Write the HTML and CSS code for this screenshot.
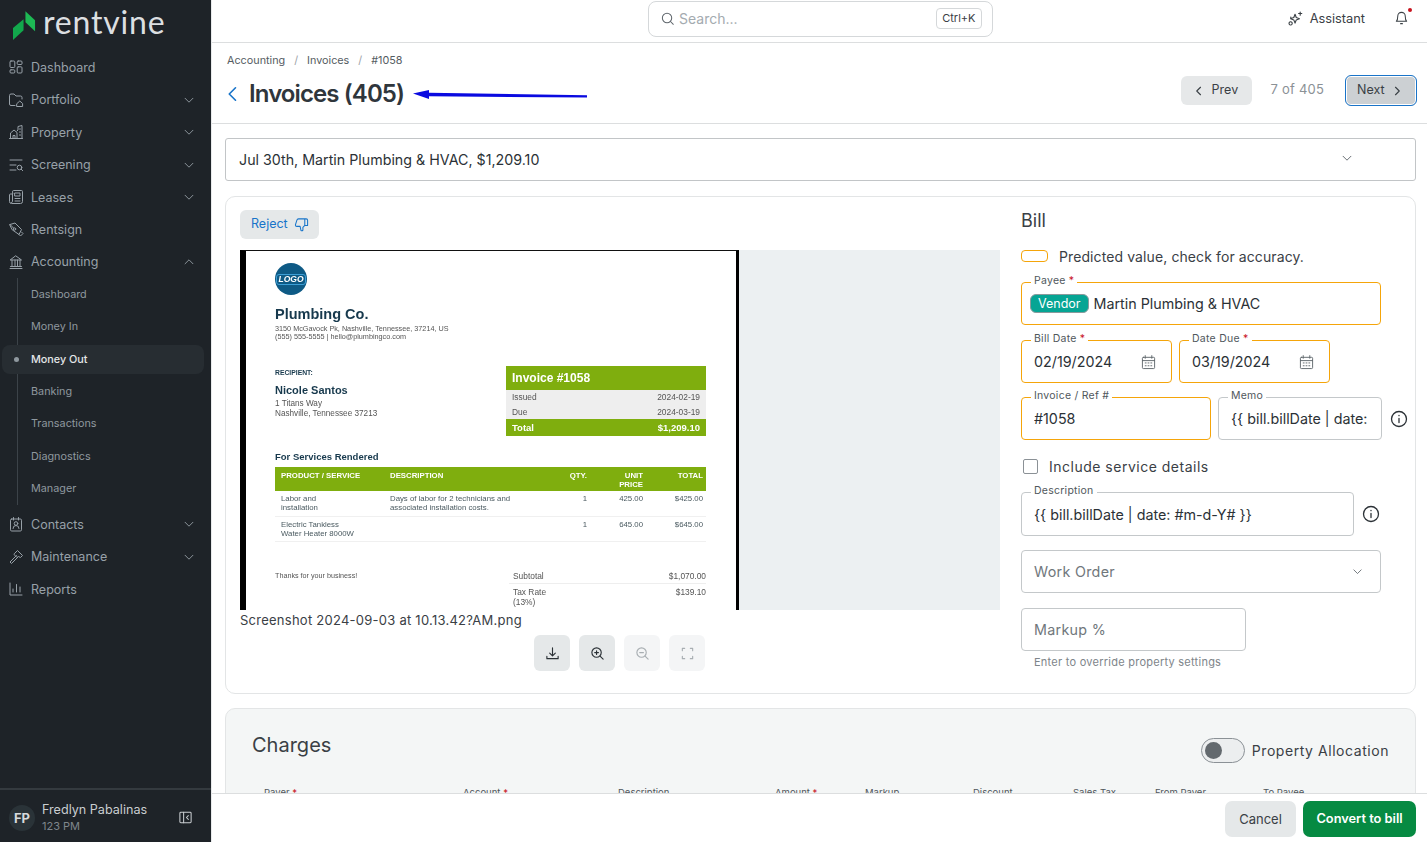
FILE: index.html
```html
<!DOCTYPE html>
<html lang="en">
<head>
    <meta charset="UTF-8">
    <meta name="viewport" content="width=device-width, initial-scale=1.0">
    <title>Invoices (405)</title>
    <link rel="stylesheet" href="styles.css">
</head>
<body>
    <svg class="icon-defs" aria-hidden="true">
        <symbol id="i-dash" viewBox="0 0 16 16"><rect x="2" y="2" width="4.8" height="6.5" rx="1"/><rect x="9.2" y="2" width="4.8" height="3.5" rx="1"/><rect x="2" y="10.8" width="4.8" height="3.2" rx="1"/><rect x="9.2" y="7.8" width="4.8" height="6.2" rx="1"/></symbol>
        <symbol id="i-folder" viewBox="0 0 16 16"><path d="M7 13.5H3a1.5 1.5 0 0 1-1.5-1.5V3.5A1.5 1.5 0 0 1 3 2h3l2 2h4.500a1.500 1.500 0 0 1 1.500 1.500V7"/><path d="M9 11.500l2.800-2.500 2.800 2.500v3H9z"/></symbol>
        <symbol id="i-building" viewBox="0 0 16 16"><path d="M1.500 14.500h13M2.500 14.500V9l3.500-3 3 2.500v6M9 7l1-1V2.500l4-1v13"/><path d="M5 14.500v-3h2v3M11.500 5h1M11.500 8h1M11.500 11h1"/></symbol>
        <symbol id="i-screen" viewBox="0 0 16 16"><path d="M2 3h12M2 8h6M2 13h6"/><circle cx="11.500" cy="10.500" r="2.300"/><path d="M13.200 12.200l1.500 1.500"/></symbol>
        <symbol id="i-news" viewBox="0 0 16 16"><path d="M4.500 2.500a1 1 0 0 1 1-1h8a1 1 0 0 1 1 1v10a2 2 0 0 1-2 2h-9a2 2 0 0 1-2-2V6a1 1 0 0 1 1-1h2zM4.500 5v7.500a1 1 0 0 1-1 1"/><rect x="7" y="4" width="5" height="3"/><path d="M7 9.500h5M7 12h5"/></symbol>
        <symbol id="i-pen" viewBox="0 0 16 16"><path d="M2 3.500L7 2l6.500 6.500-2.500 5L4.500 9zM2 3.500l3.500 3.500M11 13.500l1.500 1.500 2.500-2.500-1.500-1.500"/><circle cx="6.500" cy="8" r="1.200"/></symbol>
        <symbol id="i-bank" viewBox="0 0 16 16"><path d="M2 14.500h12M2.500 12.500h11M2.500 6h11L8 2zM4 6v6.500M7 6v6.500M9.500 6v6.500M12 6v6.500"/></symbol>
        <symbol id="i-badge" viewBox="0 0 16 16"><rect x="2.500" y="3" width="11" height="12" rx="1.200"/><path d="M5.500 1.500V4M10.500 1.500V4M5 12.500a3 3 0 0 1 6 0"/><circle cx="8" cy="7.500" r="1.800"/></symbol>
        <symbol id="i-hammer" viewBox="0 0 16 16"><path d="M8.500 6.500l-6.500 6.500 1.500 1.500 6.500-6.500M6.500 4.500L9.500 1.500l5 5-2 2-2-1-1.500 1-2.500-2.500z"/></symbol>
        <symbol id="i-chart" viewBox="0 0 16 16"><path d="M2 2v12h12M5 11V8M8.500 11V3.500M12 11V6"/></symbol>
        <symbol id="i-down" viewBox="0 0 16 16"><path d="M3.500 6l4.500 4.500L12.500 6"/></symbol>
        <symbol id="i-up" viewBox="0 0 16 16"><path d="M3.500 10l4.500-4.500 4.500 4.500"/></symbol>
        <symbol id="i-left" viewBox="0 0 16 16"><path d="M10 3L5 8l5 5"/></symbol>
        <symbol id="i-right" viewBox="0 0 16 16"><path d="M6 3l5 5-5 5"/></symbol>
        <symbol id="i-cal" viewBox="0 0 16 16"><rect x="1.500" y="3" width="13" height="12" rx="1"/><path d="M1.500 6.500h13M4.500 1.200V4M11.500 1.200V4M4.500 9h1M7.500 9h1M10.500 9h1M4.500 12h1M7.500 12h1M10.500 12h1"/></symbol>
        <symbol id="i-info" viewBox="0 0 18 18"><circle cx="9" cy="9" r="7.500"/><path d="M9 8.500v4M9 5.300v.4"/></symbol>
    </svg>

    <aside class="sidebar">
        <div class="logo">
            <svg class="logo-mark" viewBox="0 0 24 32"><path d="M13 0l10 9.500V21L13 11.500z" fill="#1db954"/><path d="M0 17.500L11 8.500V20L0 30z" fill="#12a84c"/></svg>
            <span class="logo-text">rentvine</span>
        </div>
        <nav class="nav">
            <a class="nav-item"><svg class="nav-icon"><use href="#i-dash"/></svg>Dashboard</a>
            <a class="nav-item"><svg class="nav-icon"><use href="#i-folder"/></svg>Portfolio<svg class="nav-chev"><use href="#i-down"/></svg></a>
            <a class="nav-item"><svg class="nav-icon"><use href="#i-building"/></svg>Property<svg class="nav-chev"><use href="#i-down"/></svg></a>
            <a class="nav-item"><svg class="nav-icon"><use href="#i-screen"/></svg>Screening<svg class="nav-chev"><use href="#i-down"/></svg></a>
            <a class="nav-item"><svg class="nav-icon"><use href="#i-news"/></svg>Leases<svg class="nav-chev"><use href="#i-down"/></svg></a>
            <a class="nav-item"><svg class="nav-icon"><use href="#i-pen"/></svg>Rentsign</a>
            <a class="nav-item"><svg class="nav-icon"><use href="#i-bank"/></svg>Accounting<svg class="nav-chev"><use href="#i-up"/></svg></a>
            <div class="subnav">
                <a class="sub-item">Dashboard</a>
                <a class="sub-item">Money In</a>
                <a class="sub-item active">Money Out</a>
                <a class="sub-item">Banking</a>
                <a class="sub-item">Transactions</a>
                <a class="sub-item">Diagnostics</a>
                <a class="sub-item">Manager</a>
            </div>
            <a class="nav-item"><svg class="nav-icon"><use href="#i-badge"/></svg>Contacts<svg class="nav-chev"><use href="#i-down"/></svg></a>
            <a class="nav-item"><svg class="nav-icon"><use href="#i-hammer"/></svg>Maintenance<svg class="nav-chev"><use href="#i-down"/></svg></a>
            <a class="nav-item"><svg class="nav-icon"><use href="#i-chart"/></svg>Reports</a>
        </nav>
        <div class="user">
            <div class="avatar">FP</div>
            <div class="user-info">
                <div class="user-name">Fredlyn Pabalinas</div>
                <div class="user-org">123 PM</div>
            </div>
            <svg class="collapse-icon" viewBox="0 0 16 16"><rect x="2" y="2.500" width="12" height="11" rx="1"/><path d="M6 2.500v11M11 6L9 8l2 2"/></svg>
        </div>
    </aside>

    <div class="main">
        <header class="topbar">
            <div class="search">
                <svg class="search-icon" viewBox="0 0 16 16"><circle cx="7.500" cy="7.500" r="5"/><path d="M11.200 11.200l3 3"/></svg>
                <span class="search-text">Search...</span>
                <span class="kbd">Ctrl+K</span>
            </div>
            <div class="topbar-right">
                <a class="assistant">
                    <svg class="assistant-icon" viewBox="0 0 16 16"><path d="M7.500 3.500l1.300 3.400 3.400 1.300-3.400 1.300-1.300 3.400-1.300-3.400-3.400-1.300 3.400-1.300zM13 1v3.500M11.300 2.700h3.400M2.800 11.500a1.700 1.700 0 1 0 .01 0zM3 6.500v1.500"/></svg>
                    Assistant
                </a>
                <div class="bell">
                    <svg class="bell-icon" viewBox="0 0 16 16"><path d="M8 2a4 4 0 0 0-4 4c0 4-1.500 5.500-1.500 5.500h11S12 10 12 6a4 4 0 0 0-4-4zM7 14h2"/></svg>
                    <span class="bell-dot"></span>
                </div>
            </div>
        </header>

        <div class="page-head">
            <div>
                <div class="crumbs">
                    <span>Accounting</span><span class="crumb-sep">/</span><span>Invoices</span><span class="crumb-sep">/</span><span>#1058</span>
                </div>
                <div class="title-row">
                    <svg class="back-icon"><use href="#i-left"/></svg>
                    <h1>Invoices (405)</h1>
                </div>
            </div>
            <div class="pager">
                <button class="btn btn-grey"><svg class="btn-chev"><use href="#i-left"/></svg>Prev</button>
                <span class="pager-count">7 of 405</span>
                <button class="btn btn-next">Next<svg class="btn-chev"><use href="#i-right"/></svg></button>
            </div>
            <svg class="annot-arrow" viewBox="0 0 174 12"><path d="M0 3.500L16 0v2.800L174 5.200v2.300L16 6.300V9z" fill="#0a0ae0"/></svg>
        </div>

        <div class="content">
            <div class="invoice-select">
                <span>Jul 30th, Martin Plumbing &amp; HVAC, $1,209.10</span>
                <svg class="select-chev"><use href="#i-down"/></svg>
            </div>

            <section class="card">
                <div class="doc-col">
                    <button class="btn-reject">Reject
                        <svg class="thumb-icon" viewBox="0 0 16 16"><path d="M5 2h8a1.500 1.500 0 0 1 1.500 1.500V9h-3L9.500 11v3a1.500 1.500 0 0 1-2 .5L6.500 10H3A1.500 1.500 0 0 1 1.500 8.500L3 3.500A2 2 0 0 1 5 2zM11.500 2v7"/></svg>
                    </button>
                    <div class="viewer">
                        <div class="sheet">
                            <div class="inv-logo"><span>LOGO</span></div>
                            <div class="inv-company">Plumbing Co.</div>
                            <div class="inv-address">3150 McGavock Pk, Nashville, Tennessee, 37214, US<br>(555) 555-5555 | hello@plumbingco.com</div>
                            <div class="inv-top">
                                <div class="inv-recipient">
                                    <div class="inv-rec-label">RECIPIENT:</div>
                                    <div class="inv-rec-name">Nicole Santos</div>
                                    <div class="inv-rec-addr">1 Titans Way<br>Nashville, Tennessee 37213</div>
                                </div>
                                <div class="inv-box">
                                    <div class="inv-box-head">Invoice #1058</div>
                                    <div class="inv-box-row"><span>Issued</span><span>2024-02-19</span></div>
                                    <div class="inv-box-row"><span>Due</span><span>2024-03-19</span></div>
                                    <div class="inv-box-total"><span>Total</span><span>$1,209.10</span></div>
                                </div>
                            </div>
                            <div class="inv-section">For Services Rendered</div>
                            <table class="inv-table">
                                <colgroup><col class="c-prod"><col class="c-desc"><col class="c-qty"><col class="c-unit"><col class="c-total"></colgroup>
                                <thead>
                                    <tr><th>PRODUCT / SERVICE</th><th>DESCRIPTION</th><th class="num">QTY.</th><th class="num">UNIT<br>PRICE</th><th class="num">TOTAL</th></tr>
                                </thead>
                                <tbody>
                                    <tr><td>Labor and<br>installation</td><td>Days of labor for 2 technicians and<br>associated installation costs.</td><td class="num">1</td><td class="num">425.00</td><td class="num">$425.00</td></tr>
                                    <tr><td>Electric Tankless<br>Water Heater 8000W</td><td></td><td class="num">1</td><td class="num">645.00</td><td class="num">$645.00</td></tr>
                                </tbody>
                            </table>
                            <div class="inv-foot">
                                <div class="inv-thanks">Thanks for your business!</div>
                                <div class="inv-sums">
                                    <div class="inv-sum-row line"><span>Subtotal</span><span>$1,070.00</span></div>
                                    <div class="inv-sum-row"><span>Tax Rate<br>(13%)</span><span>$139.10</span></div>
                                </div>
                            </div>
                        </div>
                    </div>
                    <div class="file-name">Screenshot 2024-09-03 at 10.13.42?AM.png</div>
                    <div class="viewer-tools">
                        <button class="tool"><svg viewBox="0 0 16 16"><path d="M8 2v8M5 7.500L8 10.500l3-3M2 11v2.500h12V11"/></svg></button>
                        <button class="tool"><svg viewBox="0 0 16 16"><circle cx="7" cy="7" r="5"/><path d="M10.700 10.700l3.300 3.300M5 7h4M7 5v4"/></svg></button>
                        <button class="tool off"><svg viewBox="0 0 16 16"><circle cx="7" cy="7" r="5"/><path d="M10.700 10.700l3.300 3.300M5 7h4"/></svg></button>
                        <button class="tool off"><svg viewBox="0 0 16 16"><path d="M2.500 5V2.500H5M11 2.500h2.500V5M13.500 11v2.500H11M5 13.500H2.500V11"/></svg></button>
                    </div>
                </div>

                <div class="bill-col">
                    <h2>Bill</h2>
                    <div class="legend"><span class="legend-pill"></span>Predicted value, check for accuracy.</div>

                    <div class="field predicted w-payee">
                        <label>Payee <b>*</b></label>
                        <span class="vendor-tag">Vendor</span>
                        <span class="payee-name">Martin Plumbing &amp; HVAC</span>
                    </div>

                    <div class="field-row gap-dates">
                        <div class="field predicted w-date">
                            <label>Bill Date <b>*</b></label>
                            <input value="02/19/2024">
                            <svg class="cal-icon"><use href="#i-cal"/></svg>
                        </div>
                        <div class="field predicted w-date">
                            <label>Date Due <b>*</b></label>
                            <input value="03/19/2024">
                            <svg class="cal-icon"><use href="#i-cal"/></svg>
                        </div>
                    </div>

                    <div class="field-row gap-ref">
                        <div class="field predicted w-ref">
                            <label>Invoice / Ref #</label>
                            <input value="#1058">
                        </div>
                        <div class="field w-memo">
                            <label>Memo</label>
                            <input value="{{ bill.billDate | date: #m-d-Y# }}">
                        </div>
                        <svg class="info-icon"><use href="#i-info"/></svg>
                    </div>

                    <div class="check-row"><span class="check"></span>Include service details</div>

                    <div class="field-row gap-desc">
                        <div class="field w-desc">
                            <label>Description</label>
                            <input value="{{ bill.billDate | date: #m-d-Y# }}">
                        </div>
                        <svg class="info-icon"><use href="#i-info"/></svg>
                    </div>

                    <div class="field w-payee gap-wo">
                        <span class="placeholder">Work Order</span>
                        <svg class="wo-chev"><use href="#i-down"/></svg>
                    </div>

                    <div class="field w-markup gap-markup">
                        <span class="placeholder">Markup %</span>
                    </div>
                    <div class="help">Enter to override property settings</div>
                </div>
            </section>

            <section class="charges">
                <div class="charges-head">
                    <h2>Charges</h2>
                    <div class="alloc">
                        <span class="toggle"><span class="toggle-knob"></span></span>
                        Property Allocation
                    </div>
                </div>
                <div class="charge-grid">
                    <span>Payer <b>*</b></span>
                    <span>Account <b>*</b></span>
                    <span>Description</span>
                    <span>Amount <b>*</b></span>
                    <span>Markup</span>
                    <span>Discount</span>
                    <span>Sales Tax</span>
                    <span>From Payer</span>
                    <span>To Payee</span>
                </div>
            </section>
        </div>

        <div class="action-bar">
            <button class="btn-cancel">Cancel</button>
            <button class="btn-convert">Convert to bill</button>
        </div>
    </div>
</body>
</html>
```

FILE: styles.css
```css
* {
    box-sizing: border-box;
}

html, body {
    height: 100%;
}

body {
    margin: 0;
    display: flex;
    overflow: hidden;
    font-family: Inter, "Liberation Sans", sans-serif;
    color: #2b3136;
    background-color: #fff;
}

button {
    font-family: inherit;
    border: none;
    cursor: pointer;
}

svg {
    fill: none;
    stroke: currentColor;
    stroke-linecap: round;
    stroke-linejoin: round;
}

.icon-defs {
    position: absolute;
    width: 0;
    height: 0;
}

/* sidebar */
.sidebar {
    width: 212px;
    flex-shrink: 0;
    height: 100%;
    display: flex;
    flex-direction: column;
    background-color: #1e2328;
    border-right: 1px solid #e8eaeb;
    color: #98a1a8;
}

.logo {
    height: 51.300px;
    display: flex;
    align-items: center;
    padding: 7px 0 0 13px;
    flex-shrink: 0;
}

.logo-mark {
    width: 23px;
    height: 31px;
    stroke: none;
    margin-top: -5px;
}

.logo-text {
    font-family: Lato, sans-serif;
    font-size: 32px;
    line-height: 1;
    letter-spacing: 0.8px;
    color: #dcdfe1;
    margin-left: 7px;
    margin-top: -14px;
}

.nav {
    flex: 1;
}

.nav-item {
    height: 32.4px;
    display: flex;
    align-items: center;
    padding-left: 8px;
    font-size: 12.500px;
    color: #98a1a8;
}

.nav-icon {
    width: 16px;
    height: 16px;
    margin-right: 7px;
    stroke-width: 1;
}

.nav-chev {
    width: 14px;
    height: 14px;
    margin-left: auto;
    margin-right: 15px;
    stroke-width: 1;
}

.subnav {
    position: relative;
    margin-bottom: 3.500px;
}

.subnav::before {
    content: "";
    position: absolute;
    left: 17px;
    top: 0;
    bottom: 0;
    width: 1px;
    background-color: #3c4349;
}

.sub-item {
    position: relative;
    height: 32.4px;
    display: flex;
    align-items: center;
    padding-left: 31px;
    font-size: 10.800px;
    color: #8f989f;
}

.sub-item.active {
    height: 29px;
    margin: 1.700px 7px 1.700px 2px;
    padding-left: 29px;
    border-radius: 8px;
    background-color: #272d32;
    color: #e4e6e8;
    font-weight: 500;
}

.sub-item.active::before {
    content: "";
    position: absolute;
    left: 12px;
    top: 12px;
    width: 5px;
    height: 5px;
    border-radius: 50%;
    background-color: #8f989f;
}

.user {
    height: 54px;
    flex-shrink: 0;
    display: flex;
    align-items: center;
    padding: 3px 18px 0 9px;
    border-top: 2px solid #343a3f;
}

.avatar {
    width: 26px;
    height: 26px;
    border-radius: 50%;
    display: flex;
    align-items: center;
    justify-content: center;
    background-color: #2a3338;
    color: #d6dadc;
    font-size: 13px;
    font-weight: 700;
}

.user-info {
    margin-left: 7px;
    flex: 1;
}

.user-name {
    font-size: 12.600px;
    line-height: 16px;
    color: #c9cdd0;
}

.user-org {
    font-size: 11px;
    line-height: 16px;
    color: #7e868c;
}

.collapse-icon {
    width: 15px;
    height: 15px;
    color: #c9cdd0;
    stroke-width: 1.100;
}

/* main column */
.main {
    position: relative;
    flex: 1;
    min-width: 0;
    height: 100%;
    display: flex;
    flex-direction: column;
    overflow: hidden;
}

.topbar {
    position: relative;
    height: 43px;
    flex-shrink: 0;
    border-bottom: 1px solid #dcdedf;
    display: flex;
    justify-content: flex-end;
    align-items: center;
    padding: 0 19px 6px 0;
}

.search {
    position: absolute;
    left: 436px;
    top: 1px;
    width: 345px;
    height: 36px;
    border: 1px solid #d5d8da;
    border-radius: 8px;
    display: flex;
    align-items: center;
    padding: 0 10px 2px 11px;
}

.search-icon {
    width: 15px;
    height: 15px;
    color: #5f666c;
    stroke-width: 1.100;
}

.search-text {
    flex: 1;
    margin-left: 4px;
    font-size: 14px;
    color: #a4abb0;
}

.kbd {
    border: 1px solid #d5d8da;
    border-radius: 4px;
    padding: 3px 5.500px;
    font-size: 11px;
    line-height: 13px;
    color: #3a4045;
}

.topbar-right {
    display: flex;
    align-items: center;
    gap: 29px;
}

.assistant {
    display: flex;
    align-items: center;
    gap: 7px;
    font-size: 12.800px;
    color: #3a4045;
}

.assistant-icon {
    width: 15px;
    height: 15px;
    stroke-width: 1.200;
}

.bell {
    position: relative;
    width: 14px;
    height: 16px;
}

.bell-icon {
    width: 15px;
    height: 16px;
    color: #3a4045;
    stroke-width: 1.100;
}

.bell-dot {
    position: absolute;
    right: -4px;
    top: -2px;
    width: 4px;
    height: 4px;
    border-radius: 50%;
    background-color: #c8141e;
}

.page-head {
    position: relative;
    height: 81px;
    flex-shrink: 0;
    border-bottom: 1px solid #dcdedf;
    display: flex;
    justify-content: space-between;
    padding: 11px 10px 0 15px;
}

.crumbs {
    font-size: 10.800px;
    line-height: 13px;
    color: #555c62;
    display: flex;
}

.crumb-sep {
    margin: 0 9px;
    color: #9ba2a7;
}

.title-row {
    display: flex;
    align-items: center;
    margin-top: 10px;
}

.back-icon {
    width: 20px;
    height: 20px;
    margin-left: -4px;
    color: #1874c9;
    stroke-width: 1.300;
}

h1 {
    margin: 0 0 0 6px;
    font-size: 24px;
    line-height: 34px;
    font-weight: 600;
    letter-spacing: -0.9px;
    color: #2f363c;
}

.pager {
    display: flex;
    align-items: center;
    height: 31px;
    margin-top: 21px;
}

.btn {
    height: 29px;
    border-radius: 6px;
    display: flex;
    align-items: center;
    gap: 7px;
    font-size: 12.500px;
    color: #3a4045;
    padding-bottom: 3px;
}

.btn-chev {
    width: 12px;
    height: 12px;
    stroke-width: 1.500;
    margin-top: 3px;
}

.btn-grey {
    width: 71px;
    padding-left: 12px;
    background-color: #e6e8e9;
}

.pager-count {
    margin: 0 21px 3px 19px;
    font-size: 13px;
    letter-spacing: 0.2px;
    color: #8b9196;
}

.btn-next {
    width: 72px;
    height: 31px;
    padding-left: 11px;
    gap: 6px;
    background-color: #ccd0d3;
    border: 1px solid #1a74c8;
    box-shadow: inset 0 0 0 1px #fff;
}

.annot-arrow {
    position: absolute;
    left: 201px;
    top: 47px;
    width: 174px;
    height: 12px;
    stroke: none;
}

.content {
    flex: 1;
    min-height: 0;
    overflow: hidden;
    padding: 14px 11px 0 13px;
}

.invoice-select {
    height: 43px;
    border: 1px solid #c2c5c7;
    border-radius: 3px;
    display: flex;
    align-items: center;
    justify-content: space-between;
    padding: 0 61px 0 13px;
    font-size: 14.250px;
    color: #2b3136;
}

.select-chev {
    width: 14px;
    height: 14px;
    color: #555c62;
    margin-top: -3px;
}

.card {
    margin-top: 15px;
    height: 498px;
    border: 1px solid #e3e5e6;
    border-radius: 10px;
    display: flex;
    padding: 13px 14px 0 14px;
}

.doc-col {
    width: 760px;
    flex-shrink: 0;
}

.btn-reject {
    width: 79px;
    height: 29px;
    border-radius: 6px;
    display: flex;
    align-items: center;
    gap: 6px;
    padding: 0 0 2px 11px;
    background-color: #e5e8e9;
    color: #1874c9;
    font-size: 12.500px;
}

.thumb-icon {
    width: 15px;
    height: 15px;
    stroke-width: 1.100;
    margin-top: 2px;
}

/* the uploaded invoice picture */
.viewer {
    margin-top: 11px;
    height: 360px;
    overflow: hidden;
    background-color: #ecf0f2;
}

.sheet {
    width: 499px;
    height: 360px;
    overflow: hidden;
    background-color: #fff;
    border-top: 1px solid #111;
    border-left: 6px solid #000;
    border-right: 3px solid #000;
    padding: 12px 30px 0 29px;
    font-family: "Liberation Sans", sans-serif;
    color: #555;
    filter: blur(0.25px);
}

.inv-logo {
    width: 32px;
    height: 32px;
    border-radius: 50%;
    background-color: #0e5a85;
    display: flex;
    align-items: center;
    justify-content: center;
    color: #fff;
    font-size: 8.500px;
    font-weight: 700;
    font-style: italic;
}

.inv-logo span {
    border: 1px solid #3d9fd6;
    border-radius: 3px;
    padding: 0 1px;
    line-height: 9px;
}

.inv-company {
    margin-top: 11px;
    font-size: 14.500px;
    line-height: 17px;
    font-weight: 700;
    color: #17394d;
}

.inv-address {
    font-size: 7.250px;
    line-height: 8px;
    margin-top: 2px;
}

.inv-top {
    display: flex;
    justify-content: space-between;
    margin-top: 25px;
    height: 70px;
}

.inv-recipient {
    padding-top: 3px;
}

.inv-rec-label {
    font-size: 6.800px;
    line-height: 8px;
    font-weight: 700;
    color: #17394d;
}

.inv-rec-name {
    margin-top: 7px;
    font-size: 11px;
    line-height: 12px;
    font-weight: 700;
    color: #17394d;
}

.inv-rec-addr {
    margin-top: 3px;
    font-size: 8.200px;
    line-height: 10px;
}

.inv-box {
    width: 200px;
    font-size: 8.400px;
}

.inv-box-head {
    height: 24px;
    padding: 0 6px;
    display: flex;
    align-items: center;
    background-color: #7fae0e;
    color: #fff;
    font-size: 12px;
    font-weight: 700;
}

.inv-box-row, .inv-box-total {
    display: flex;
    justify-content: space-between;
    align-items: center;
    padding: 0 6px;
}

.inv-box-row {
    height: 14.500px;
    background-color: #eee;
}

.inv-box-total {
    height: 17px;
    background-color: #7fae0e;
    color: #fff;
    font-size: 9.500px;
    font-weight: 700;
}

.inv-section {
    margin-top: 15px;
    font-size: 9.500px;
    line-height: 12px;
    font-weight: 700;
    color: #17394d;
}

.inv-table {
    width: 431px;
    margin-top: 4px;
    border-collapse: collapse;
    table-layout: fixed;
    font-size: 7.800px;
    line-height: 9px;
}

.c-prod { width: 109px; }
.c-desc { width: 179px; }
.c-qty { width: 27px; }
.c-unit { width: 56px; }

.inv-table th {
    height: 24px;
    padding: 4px 3px 2px 6px;
    vertical-align: top;
    text-align: left;
    background-color: #7fae0e;
    color: #fff;
    font-weight: 700;
}

.inv-table td {
    height: 25px;
    padding: 3px 3px 2px 6px;
    vertical-align: top;
    border-bottom: 1px solid #f0f0f0;
    color: #4a5a60;
}

.inv-table .num {
    text-align: right;
}

.inv-foot {
    display: flex;
    justify-content: space-between;
    margin-top: 29px;
}

.inv-thanks {
    font-size: 7.200px;
    line-height: 9px;
}

.inv-sums {
    width: 197px;
    font-size: 8.400px;
    line-height: 10px;
}

.inv-sum-row {
    display: flex;
    justify-content: space-between;
    padding: 0 0 0 4px;
}

.inv-sum-row.line {
    border-bottom: 1px solid #eee;
    padding-bottom: 2px;
    margin-bottom: 3px;
}

.file-name {
    margin-top: 2px;
    font-size: 13px;
    line-height: 16px;
    letter-spacing: 0.25px;
    color: #3a4045;
}

.viewer-tools {
    margin: 7px 0 0 294px;
    display: flex;
    gap: 9px;
}

.tool {
    width: 36px;
    height: 36px;
    border-radius: 6px;
    display: flex;
    align-items: center;
    justify-content: center;
    background-color: #e5e8e9;
    color: #2b3136;
    padding: 0;
}

.tool svg {
    width: 15px;
    height: 15px;
    stroke-width: 1.200;
}

.tool.off {
    background-color: #f4f5f6;
    color: #a8aeb2;
}

/* bill form */
.bill-col {
    margin-left: 21px;
    flex: 1;
    min-width: 0;
}

h2 {
    margin: 0;
    font-size: 18px;
    line-height: 22px;
    font-weight: 400;
    color: #3a4045;
}

.legend {
    display: flex;
    align-items: center;
    margin-top: 14px;
    height: 20px;
    font-size: 14px;
    letter-spacing: 0.1px;
    color: #3a4045;
}

.legend-pill {
    width: 27px;
    height: 12px;
    margin-right: 11px;
    border: 1px solid #f5a50a;
    border-radius: 4px;
}

.field {
    position: relative;
    height: 43px;
    border: 1px solid #c4c8ca;
    border-radius: 4px;
    display: flex;
    align-items: center;
    padding: 0 12px;
    flex-shrink: 0;
}

.field.predicted {
    border-color: #f5a50a;
}

.field label {
    position: absolute;
    left: 9px;
    top: -9px;
    padding: 0 3px;
    background-color: #fff;
    font-size: 10.500px;
    line-height: 14px;
    letter-spacing: 0.25px;
    color: #50575c;
}

.field label b {
    font-weight: 400;
    color: #c8141e;
}

.field input {
    width: 100%;
    min-width: 0;
    padding: 0;
    border: none;
    outline: none;
    background: none;
    font-family: inherit;
    font-size: 14.300px;
    color: #2b3136;
}

.w-payee { width: 360px; }
.w-date { width: 151px; }
.w-ref { width: 190px; }
.w-memo { width: 164px; }
.w-desc { width: 333px; height: 44px; }
.w-markup { width: 225px; }

.w-payee.predicted {
    margin-top: 16px;
    padding-left: 8px;
}

.vendor-tag {
    height: 19px;
    border: 1px solid #8a9a9c;
    border-radius: 6px;
    padding: 0 7px;
    display: flex;
    align-items: center;
    background-color: #06a594;
    color: #fff;
    font-size: 12.500px;
}

.payee-name {
    margin-left: 5px;
    font-size: 14.300px;
}

.field-row {
    display: flex;
    align-items: center;
    gap: 7px;
}

.gap-dates { margin-top: 15px; }
.gap-ref { margin-top: 14px; }
.gap-desc { margin-top: 17px; }
.gap-wo { margin-top: 14px; }
.gap-markup { margin-top: 15px; }

.cal-icon {
    width: 15px;
    height: 16px;
    flex-shrink: 0;
    margin-right: 3px;
    color: #5f666c;
    stroke-width: 1;
}

.info-icon {
    width: 18px;
    height: 18px;
    flex-shrink: 0;
    margin-left: 1px;
    color: #2b3136;
    stroke-width: 1.300;
}

.check-row {
    display: flex;
    align-items: center;
    margin-top: 17px;
    padding-left: 2px;
    height: 18px;
    font-size: 14px;
    letter-spacing: 0.5px;
    color: #3a4045;
}

.check {
    width: 15px;
    height: 15px;
    margin-right: 11px;
    border: 1px solid #8b9196;
    border-radius: 2px;
}

.placeholder {
    font-size: 14.300px;
    letter-spacing: 0.3px;
    color: #70777c;
}

.wo-chev {
    width: 13px;
    height: 13px;
    margin-left: auto;
    margin-right: 4px;
    color: #555c62;
}

.help {
    margin: 4px 0 0 13px;
    font-size: 11px;
    line-height: 14px;
    letter-spacing: 0.25px;
    color: #7e858a;
}

/* charges, runs on under the action bar */
.charges {
    margin-top: 14px;
    height: 200px;
    border: 1px solid #e3e5e6;
    border-radius: 10px;
    background-color: #f4f6f6;
    padding: 24px 26px 0 26px;
}

.charges-head {
    display: flex;
    justify-content: space-between;
    align-items: flex-start;
}

.charges-head h2 {
    font-size: 20px;
    line-height: 24px;
}

.alloc {
    display: flex;
    align-items: center;
    gap: 7px;
    margin-top: 5px;
    font-size: 14px;
    letter-spacing: 0.55px;
    color: #3a4045;
}

.toggle {
    width: 44px;
    height: 25px;
    border: 1px solid #8b9196;
    border-radius: 13px;
    background-color: #eceeef;
    display: flex;
    align-items: center;
    padding-left: 3px;
}

.toggle-knob {
    width: 17px;
    height: 17px;
    border-radius: 50%;
    background-color: #63696e;
}

.charge-grid {
    display: grid;
    grid-template-columns: 199px 155px 157px 90px 108px 100px 82px 108px 1fr;
    margin-top: 24px;
    padding-left: 12px;
    font-size: 9.500px;
    line-height: 12px;
    color: #50575c;
}

.charge-grid b {
    font-weight: 400;
    color: #c8141e;
}

.action-bar {
    position: absolute;
    left: 0;
    right: 0;
    bottom: 0;
    height: 49px;
    border-top: 1px solid #dcdedf;
    background-color: #fff;
    display: flex;
    justify-content: flex-end;
    gap: 7px;
    padding: 7px 11px 0 0;
}

.btn-cancel, .btn-convert {
    height: 36px;
    border-radius: 7px;
    font-size: 13px;
    padding-bottom: 2px;
}

.btn-cancel {
    width: 71px;
    background-color: #e5e8e9;
    color: #3a4045;
}

.btn-convert {
    width: 113px;
    background-color: #068a42;
    color: #fff;
    font-size: 12.800px;
    font-weight: 600;
}
```
